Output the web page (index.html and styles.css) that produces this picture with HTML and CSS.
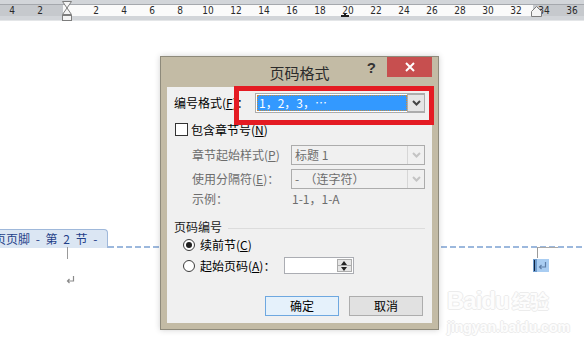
FILE: index.html
```html
<!DOCTYPE html>
<html lang="zh-CN">
<head>
    <meta charset="UTF-8">
    <meta name="viewport" content="width=device-width, initial-scale=1.0">
    <title>页码格式</title>
    <link rel="stylesheet" href="styles.css">
</head>
<body>
    <div class="ruler">
        <div class="ruler-band">
            <span>4</span><span>2</span><span></span><span>2</span><span>4</span><span>6</span><span>8</span><span>10</span><span>12</span><span>14</span><span>16</span><span>18</span><span>20</span><span>22</span><span>24</span><span>26</span><span>28</span><span>30</span><span>32</span><span>34</span><span>36</span>
        </div>
        <svg class="indent-left" width="12" height="22" viewBox="0 0 12 22">
            <polygon points="1.5,1.5 10.5,1.5 6,8 " fill="#f4f4f4" stroke="#7d7d7d"/>
            <polygon points="6,8 1.5,14.5 10.5,14.5" fill="#f4f4f4" stroke="#7d7d7d"/>
            <rect x="1.5" y="15.5" width="9" height="5" fill="#f4f4f4" stroke="#7d7d7d"/>
        </svg>
        <span class="tab-stop"></span>
        <svg class="indent-right" width="11" height="11" viewBox="0 0 11 11">
            <polygon points="5.5,0.5 10.5,5.5 10.5,10.5 0.5,10.5 0.5,5.5" fill="#f4f4f4" stroke="#7d7d7d"/>
        </svg>
    </div>

    <div class="page">
        <div class="header-row">
            <div class="footer-tab">页页脚 - 第 2 节 -</div>
            <div class="dash"></div>
        </div>
        <div class="marks">
            <span class="mark-left"></span>
            <span class="mark-right"></span>
        </div>
        <div class="para">
            <svg class="ret ret-left" width="9" height="8" viewBox="0 0 9 8">
                <path d="M7.5 0 V5 H1.5 M3.5 3 L1.5 5 L3.5 7" fill="none" stroke="#8a8a8a" stroke-width="1.2"/>
            </svg>
            <span class="sel">
                <i class="caret"></i>
                <svg class="ret" width="9" height="8" viewBox="0 0 9 8">
                    <path d="M7.5 0 V5 H1.5 M3.5 3 L1.5 5 L3.5 7" fill="none" stroke="#5f7fa8" stroke-width="1.2"/>
                </svg>
            </span>
        </div>
    </div>

    <div class="watermark">
        <div class="wm-logo">Baidu<span class="wm-cn">经验</span></div>
        <div class="wm-url">jingyan.baidu.com</div>
    </div>

    <div class="dialog">
        <div class="titlebar">
            <span class="tb-side"></span>
            <span class="title">页码格式</span>
            <span class="tb-side tb-right">
                <span class="help">?</span>
                <span class="close">
                    <svg width="10" height="10" viewBox="0 0 10 10"><path d="M1 1 L9 9 M9 1 L1 9" stroke="#fff" stroke-width="2"/></svg>
                </span>
            </span>
        </div>

        <div class="dlg-body">
            <div class="row row-format">
                <span class="lbl-format">编号格式(<u>F</u>)：</span>
                <div class="combo combo-active">
                    <span class="combo-val"><span class="sel-text">1，2，3，…</span></span>
                    <span class="combo-btn">
                        <svg width="9" height="6" viewBox="0 0 9 6"><path d="M1 1 L4.5 4.5 L8 1" fill="none" stroke="#444" stroke-width="2"/></svg>
                    </span>
                </div>
            </div>

            <div class="row row-check">
                <span class="checkbox"></span>
                <span>包含章节号(<u>N</u>)</span>
            </div>

            <div class="row row-sub disabled">
                <span class="lbl-sub">章节起始样式(<u>P</u>)</span>
                <div class="combo">
                    <span class="combo-val">标题 1</span>
                    <span class="combo-btn">
                        <svg width="9" height="6" viewBox="0 0 9 6"><path d="M1 1 L4.5 4.5 L8 1" fill="none" stroke="#c4c4c4" stroke-width="2"/></svg>
                    </span>
                </div>
            </div>

            <div class="row row-sub row-sep disabled">
                <span class="lbl-sub">使用分隔符(<u>E</u>)：</span>
                <div class="combo">
                    <span class="combo-val">-&nbsp;&nbsp;（连字符）</span>
                    <span class="combo-btn">
                        <svg width="9" height="6" viewBox="0 0 9 6"><path d="M1 1 L4.5 4.5 L8 1" fill="none" stroke="#c4c4c4" stroke-width="2"/></svg>
                    </span>
                </div>
            </div>

            <div class="row row-sub row-example disabled">
                <span class="lbl-sub">示例：</span>
                <span class="example-val">1-1，1-A</span>
            </div>

            <div class="row group">
                <span>页码编号</span>
                <span class="group-line"></span>
            </div>

            <div class="row row-radio row-radio-first">
                <span class="radio checked"></span>
                <span>续前节(<u>C</u>)</span>
            </div>

            <div class="row row-radio row-radio-start">
                <span class="radio"></span>
                <span class="lbl-start">起始页码(<u>A</u>)：</span>
                <div class="spin">
                    <span class="spin-field"></span>
                    <span class="spin-btns">
                        <span class="spin-up"></span>
                        <span class="spin-down"></span>
                    </span>
                </div>
            </div>

            <div class="buttons">
                <button class="btn btn-ok">确定</button>
                <button class="btn">取消</button>
            </div>
        </div>

        <div class="highlight"></div>
    </div>
</body>
</html>
```

FILE: styles.css
```css
:root {
    --frame: #c3bba5;
    --frame-line: #8e8a7b;
    --face: #f0f0f0;
    --disabled: #6d6d6d;
    --dash: #9cb8dd;
}

* {
    box-sizing: border-box;
}

body {
    margin: 0;
    width: 584px;
    height: 349px;
    overflow: hidden;
    position: relative;
    background: #ffffff;
    font-family: "Noto Sans CJK SC", "DejaVu Sans", sans-serif;
    font-size: 12px;
    color: #000;
}

/* ruler */
.ruler {
    position: relative;
    height: 21px;
    background: #d2d5d9;
    border-bottom: 1px solid #e4e6e8;
    padding-top: 4px;
}

.ruler-band {
    display: flex;
    height: 12px;
    margin-left: -2px;
    border-top: 1px solid #a5a8ad;
    background: linear-gradient(to right, #c6c9cd 65px, #fafafa 65px, #fafafa 535px, #c6c9cd 535px);
}

.ruler-band span {
    flex: 0 0 28px;
    text-align: center;
    font-family: "DejaVu Sans", sans-serif;
    font-stretch: condensed;
    font-size: 10px;
    line-height: 11px;
    color: #2a2a2a;
}

.indent-left {
    position: absolute;
    left: 61px;
    top: 0;
}

.indent-right {
    position: absolute;
    left: 531px;
    top: 6px;
}

.tab-stop {
    position: absolute;
    left: 341px;
    top: 15px;
    width: 8px;
    height: 2px;
    background: #1e1e1e;
}

.tab-stop::before {
    content: "";
    position: absolute;
    left: 3px;
    top: -2px;
    width: 2px;
    height: 2px;
    background: #1e1e1e;
}

/* page */
.page {
    padding-top: 208px;
}

.header-row {
    display: flex;
    align-items: flex-end;
}

.footer-tab {
    margin-left: -7px;
    height: 19px;
    padding: 0 10px 0 0;
    background: #dbe6f3;
    border: 1px solid #9fb8da;
    border-bottom: none;
    border-top-right-radius: 4px;
    color: #1f3f88;
    font-size: 12px;
    line-height: 18px;
    word-spacing: 3px;
    white-space: nowrap;
}

.dash {
    flex: 1;
    height: 2px;
    background: repeating-linear-gradient(to right, var(--dash) 0 6px, transparent 6px 9px);
}

.marks {
    display: flex;
    height: 12px;
    margin-top: -1px;
}

.mark-left {
    margin-left: 67px;
    width: 1px;
    height: 12px;
    background: #9a9a9a;
}

.mark-right {
    margin-left: auto;
    margin-right: 26px;
    width: 21px;
    height: 11px;
    border-left: 1px solid #9a9a9a;
    border-top: 1px solid #a9a9a9;
}

.para {
    display: flex;
    align-items: flex-start;
}

.ret-left {
    margin-left: 66px;
    margin-top: 17px;
}

.sel {
    display: flex;
    align-items: center;
    margin-left: auto;
    margin-right: 35px;
    width: 16px;
    height: 13px;
    background: #a9cdf2;
}

.caret {
    position: relative;
    width: 4px;
    height: 13px;
    margin-right: 1px;
    background: #6f9ccd;
}

.caret::before {
    content: "";
    position: absolute;
    left: 1px;
    top: 1px;
    width: 1px;
    height: 11px;
    background: #10233f;
}

/* watermark */
.watermark {
    position: absolute;
    left: 447px;
    top: 285px;
    color: #fdfdfd;
    text-shadow: 1px 0 #ececec, -1px 0 #ececec, 0 1px #ececec, 0 -1px #ececec;
    font-family: "Liberation Sans", "Noto Sans CJK SC", sans-serif;
}

.wm-logo {
    font-size: 24px;
    font-weight: bold;
    line-height: 32px;
    letter-spacing: -1px;
}

.wm-cn {
    margin-left: 3px;
    font-size: 19px;
}

.wm-url {
    font-size: 14px;
    font-weight: bold;
    line-height: 16px;
}

/* dialog */
.dialog {
    position: absolute;
    left: 160px;
    top: 56px;
    width: 279px;
    height: 274px;
    background: var(--frame);
    border: 1px solid var(--frame-line);
    padding: 0 6px 6px;
    box-shadow: 0 0 6px rgba(0, 0, 0, 0.18);
}

.titlebar {
    display: flex;
    height: 30px;
}

.tb-side {
    flex: 1;
}

.tb-right {
    display: flex;
    justify-content: flex-end;
    align-items: flex-start;
}

.title {
    font-size: 15px;
    line-height: 31px;
    color: #2b2b2b;
}

.help {
    margin-top: 3px;
    margin-right: 11px;
    font-family: "Liberation Sans", sans-serif;
    font-weight: bold;
    font-size: 15px;
    line-height: 16px;
    color: #333;
}

.close {
    display: flex;
    align-items: center;
    justify-content: center;
    width: 45px;
    height: 20px;
    background: #c74f4f;
}

.dlg-body {
    height: 236px;
    background: var(--face);
    padding: 6px 7px 0 7px;
}

.row {
    display: flex;
    align-items: center;
    line-height: 14px;
    white-space: nowrap;
}

.row-format {
    height: 20px;
}

.lbl-format {
    width: 81px;
}

.combo {
    display: flex;
    height: 20px;
    border: 1px solid #acacac;
    background: var(--face);
}

.combo-active {
    width: 170px;
    background: #ffffff;
    padding: 1px 0 1px 1px;
}

.combo-val {
    flex: 1;
    padding-left: 3px;
    line-height: 18px;
}

.combo-active .combo-val {
    padding: 0;
    display: flex;
}

.sel-text {
    flex: 1;
    background: #3399ff;
    color: #ffffff;
    border: 1px dotted #c98b3c;
    padding-left: 1px;
    line-height: 14px;
}

.combo-btn {
    display: flex;
    align-items: center;
    justify-content: center;
    width: 17px;
    border-left: 1px solid #d6d6d6;
}

.combo-active .combo-btn {
    margin: -1px 0;
    background: #e5e5e5;
    border: 1px solid #acacac;
    border-right: none;
}

.row-check {
    margin-top: 10px;
    height: 13px;
    padding-left: 1px;
}

.checkbox {
    width: 13px;
    height: 13px;
    margin-right: 3px;
    border: 1px solid #333;
    background: #ffffff;
}

.row-sub {
    margin-top: 9px;
    height: 20px;
    padding-left: 18px;
}

.row-sep {
    margin-top: 4px;
}

.row-example {
    margin-top: 3px;
    height: 14px;
}

.disabled {
    color: var(--disabled);
}

.lbl-sub {
    width: 99px;
}

.row-sub .combo {
    width: 134px;
}

.example-val {
    padding-left: 1px;
}

.group {
    margin-top: 14px;
    height: 14px;
    color: #1a1a1a;
}

.group-line {
    flex: 1;
    height: 1px;
    margin-left: 6px;
    margin-top: 2px;
    background: #dcdcdc;
}

.row-radio {
    padding-left: 9px;
}

.row-radio-first {
    margin-top: 5px;
    height: 12px;
}

.row-radio-start {
    margin-top: 6px;
    height: 17px;
}

.radio {
    position: relative;
    width: 12px;
    height: 12px;
    margin-right: 5px;
    border: 1px solid #3c3c3c;
    border-radius: 50%;
    background: #ffffff;
}

.radio.checked::after {
    content: "";
    position: absolute;
    left: 2px;
    top: 2px;
    width: 6px;
    height: 6px;
    border-radius: 50%;
    background: #1f1f1f;
}

.lbl-start {
    width: 84px;
}

.spin {
    display: flex;
    width: 70px;
    height: 17px;
    border: 1px solid #abadb3;
    background: #ffffff;
    padding: 1px;
}

.spin-field {
    flex: 1;
}

.spin-btns {
    display: flex;
    flex-direction: column;
    width: 15px;
    border: 1px solid #acacac;
    background: #e6e6e6;
}

.spin-up,
.spin-down {
    flex: 1;
    position: relative;
}

.spin-up {
    border-bottom: 1px solid #acacac;
}

.spin-up::after,
.spin-down::after {
    content: "";
    position: absolute;
    left: 3px;
    border-left: 3.5px solid transparent;
    border-right: 3.5px solid transparent;
}

.spin-up::after {
    top: 1px;
    border-bottom: 4px solid #222;
}

.spin-down::after {
    top: 1px;
    border-top: 4px solid #222;
}

.buttons {
    display: flex;
    justify-content: flex-end;
    gap: 10px;
    margin-top: 22px;
    padding-right: 2px;
}

.btn {
    width: 74px;
    height: 20px;
    padding: 0;
    border: 1px solid #adadad;
    background: #e1e1e1;
    font-family: inherit;
    font-size: 12px;
    line-height: 16px;
    color: #000;
}

.btn-ok {
    border-color: #6ea8e0;
    background: #e5f1fb;
}

.highlight {
    position: absolute;
    left: 73px;
    top: 29px;
    width: 200px;
    height: 39px;
    border: 5px solid #e41b23;
}
```
